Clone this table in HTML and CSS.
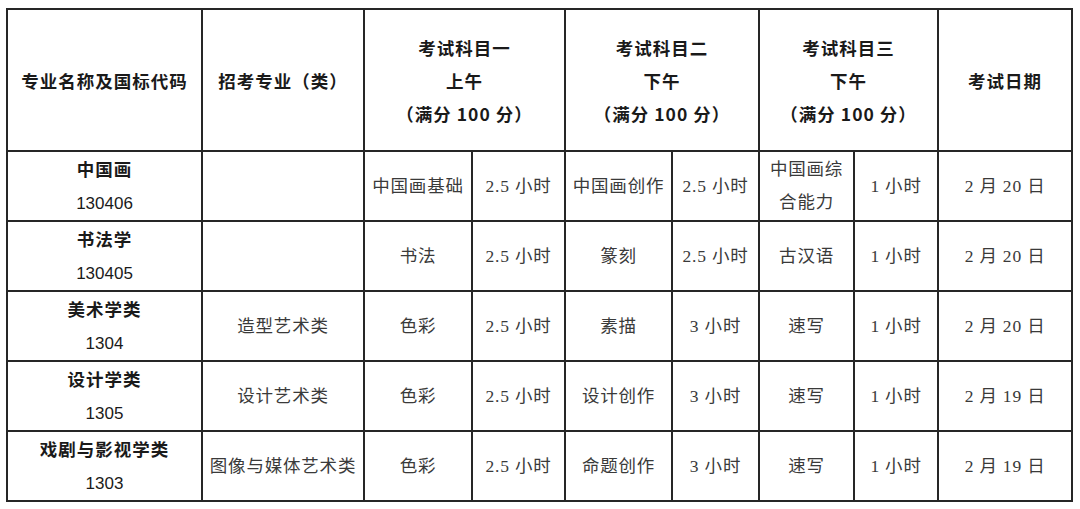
FILE: index.html
```html
<!DOCTYPE html>
<html lang="zh-CN">
<head>
<meta charset="utf-8">
<title>考试科目安排</title>
<link rel="stylesheet" href="styles.css">
</head>
<body>
<div class="page">
<table class="exam">
  <colgroup>
    <col class="c1"><col class="c2"><col class="c3"><col class="c4"><col class="c5"><col class="c6"><col class="c7"><col class="c8"><col class="c9">
  </colgroup>
  <thead>
    <tr>
      <th>专业名称及国标代码</th>
      <th>招考专业（类）</th>
      <th colspan="2">考试科目一<br>上午<br>（满分 100 分）</th>
      <th colspan="2">考试科目二<br>下午<br>（满分 100 分）</th>
      <th colspan="2">考试科目三<br>下午<br>（满分 100 分）</th>
      <th>考试日期</th>
    </tr>
  </thead>
  <tbody>
    <tr>
      <td class="major">中国画<br><span class="code">130406</span></td>
      <td></td>
      <td>中国画基础</td><td>2.5 小时</td>
      <td>中国画创作</td><td>2.5 小时</td>
      <td>中国画综<br>合能力</td><td>1 小时</td>
      <td>2 月 20 日</td>
    </tr>
    <tr>
      <td class="major">书法学<br><span class="code">130405</span></td>
      <td></td>
      <td>书法</td><td>2.5 小时</td>
      <td>篆刻</td><td>2.5 小时</td>
      <td>古汉语</td><td>1 小时</td>
      <td>2 月 20 日</td>
    </tr>
    <tr>
      <td class="major">美术学类<br><span class="code">1304</span></td>
      <td>造型艺术类</td>
      <td>色彩</td><td>2.5 小时</td>
      <td>素描</td><td>3 小时</td>
      <td>速写</td><td>1 小时</td>
      <td>2 月 20 日</td>
    </tr>
    <tr>
      <td class="major">设计学类<br><span class="code">1305</span></td>
      <td>设计艺术类</td>
      <td>色彩</td><td>2.5 小时</td>
      <td>设计创作</td><td>3 小时</td>
      <td>速写</td><td>1 小时</td>
      <td>2 月 19 日</td>
    </tr>
    <tr>
      <td class="major">戏剧与影视学类<br><span class="code">1303</span></td>
      <td>图像与媒体艺术类</td>
      <td>色彩</td><td>2.5 小时</td>
      <td>命题创作</td><td>3 小时</td>
      <td>速写</td><td>1 小时</td>
      <td>2 月 19 日</td>
    </tr>
  </tbody>
</table>
</div>
</body>
</html>
```
FILE: styles.css
```css
html, body {
  margin: 0;
  padding: 0;
  background: #ffffff;
}

.page {
  padding: 8px 7px 0 6px;
}

.exam {
  border-collapse: collapse;
  table-layout: fixed;
  width: 1066px;
  color: #111;
}

.c1 { width: 195px; }
.c2 { width: 162px; }
.c3 { width: 108px; }
.c4 { width: 93px; }
.c5 { width: 107px; }
.c6 { width: 87px; }
.c7 { width: 95px; }
.c8 { width: 84px; }
.c9 { width: 134px; }

.exam th,
.exam td {
  border: 2px solid #262626;
  padding: 0;
  text-align: center;
  vertical-align: middle;
}

.exam th {
  height: 140px;
  font-family: "Noto Sans CJK SC", sans-serif;
  font-weight: 700;
  font-size: 17.5px;
  letter-spacing: 1px;
  line-height: 33px;
  color: #1a1a1a;
}

.exam td {
  height: 66px;
  font-family: "Liberation Serif", "Noto Sans CJK SC", serif;
  font-weight: 400;
  font-size: 17.5px;
  letter-spacing: 0.8px;
  line-height: 33px;
  color: #3a3a3a;
}

.exam td.major {
  font-family: "Noto Sans CJK SC", sans-serif;
  font-weight: 700;
  font-size: 17.5px;
  letter-spacing: 1px;
  color: #1a1a1a;
}

.exam td.major .code {
  font-family: "Liberation Sans", "Noto Sans CJK SC", sans-serif;
  font-weight: 400;
  letter-spacing: 0;
  font-size: 17px;
}
```
